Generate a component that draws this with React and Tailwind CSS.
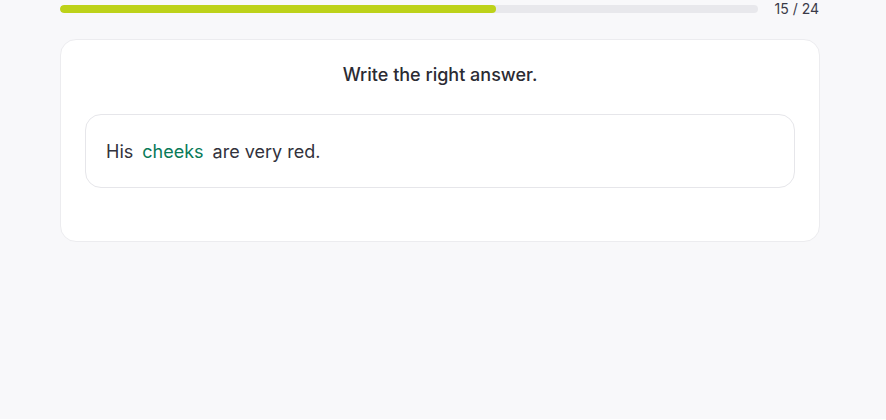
const App = () => {
  const done = 15;
  const total = 24;

  return (
    <div className="min-h-[420px] bg-[#f8f8fa] font-['Inter',sans-serif] text-[#2b2b33]">
      <div className="ml-[60px] w-[760px]">
        {/* progress */}
        <div className="flex items-center gap-4 h-[19px] -mt-[1px]">
          <div className="flex-1 h-2 rounded-full bg-[#e8e8ec] overflow-hidden">
            <div className="h-full rounded-full bg-[#bdd219]" style={{ width: `${(436 / 698) * 100}%` }} />
          </div>
          <span className="text-[14px] leading-none text-[#3a3a48] pr-[1px]">
            {done} / {total}
          </span>
        </div>

        {/* card */}
        <div className="mt-[21px] rounded-2xl border border-[#ececef] bg-white px-6 pt-[23px] pb-[53px]">
          <h2 className="text-center text-[18px] leading-6 font-medium text-[#2b2b33]">
            Write the right answer.
          </h2>
          <div className="mt-[27px] flex items-center gap-[9px] rounded-2xl border border-[#e6e6ea] h-[74px] px-5 text-[18px] text-[#32323c]">
            <span>His</span>
            <span className="text-[#087a58]">cheeks</span>
            <span>are very red.</span>
          </div>
        </div>
      </div>
    </div>
  );
};

export default App;
